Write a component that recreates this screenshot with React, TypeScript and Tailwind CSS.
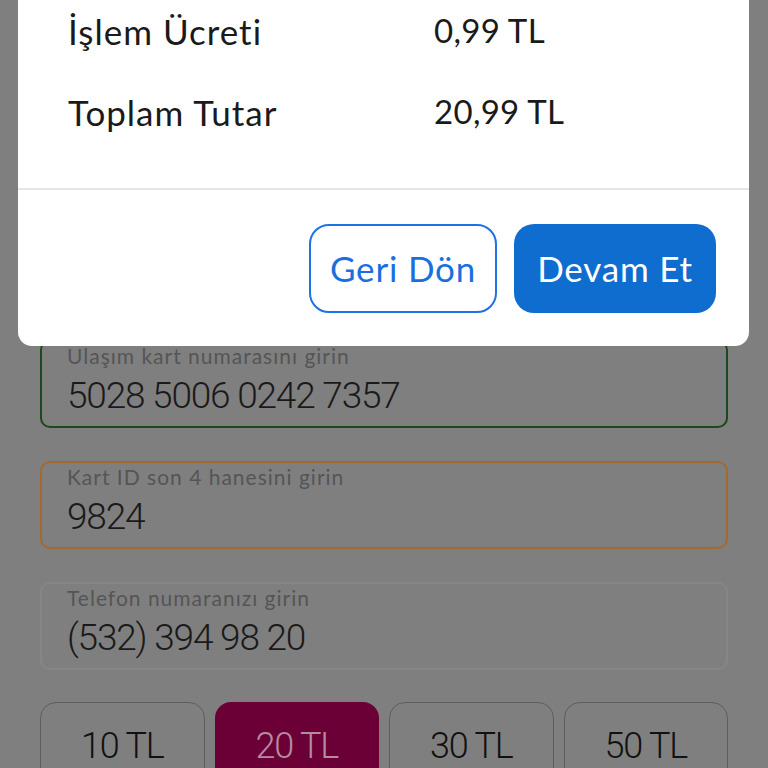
import React from "react";

const rounded = { fontFamily: "Lato, 'Open Sans', sans-serif" } as React.CSSProperties;
const cond = { fontFamily: "Roboto, 'Liberation Sans', sans-serif" } as React.CSSProperties;

function Field({ label, value, border }: { label: string; value: string; border: string }) {
  return (
    <div className={`h-[88px] rounded-[10px] border-2 ${border} px-[25px] pt-[2px] flex flex-col`}>
      <div className="text-[21px] leading-[24px] text-[#555555] tracking-[1px]" style={rounded}>
        {label}
      </div>
      <div className="text-[37px] leading-[44px] text-[#1a1a1a] tracking-[-1.2px] font-light mt-[6px]" style={cond}>
        {value}
      </div>
    </div>
  );
}

export default function App() {
  const amounts = ["10 TL", "20 TL", "30 TL", "50 TL"];
  return (
    <div className="relative w-[768px] h-[768px] overflow-hidden bg-[#7f7f7f]">
      <div className="flex flex-col px-[40px] pt-[340px] gap-[33px]">
        <Field label="Ulaşım kart numarasını girin" value="5028 5006 0242 7357" border="border-[#1e471e]" />
        <Field label="Kart ID son 4 hanesini girin" value="9824" border="border-[#a4692c]" />
        <Field label="Telefon numaranızı girin" value="(532) 394 98 20" border="border-[#868686]" />
        <div className="grid grid-cols-4 gap-[10px] -mt-[1px]">
          {amounts.map((a, i) => (
            <div
              key={a}
              className={
                i === 1
                  ? "h-[90px] rounded-[16px] bg-[#6a0035] text-[#b68ba2] flex justify-center pt-[22px]"
                  : "h-[90px] rounded-[16px] border border-[#5e5e5e] text-[#111111] flex justify-center pt-[21px]"
              }
            >
              <span className="text-[36px] leading-[44px] font-light tracking-[-1.2px]" style={cond}>
                {a}
              </span>
            </div>
          ))}
        </div>
      </div>

      <div className="absolute left-[18px] right-[19px] top-0 h-[346px] bg-white rounded-b-[14px] flex flex-col">
        <div className="h-[188px] px-[50px] flex flex-col text-[#1a1a1a]" style={rounded}>
          <div className="flex items-center h-[62px]">
            <span className="w-[366px] text-[35px] tracking-[1px]">İşlem Ücreti</span>
            <span className="text-[33px] tracking-[0.3px]">0,99 TL</span>
          </div>
          <div className="flex items-center h-[100px]">
            <span className="w-[366px] text-[35px] tracking-[1px]">Toplam Tutar</span>
            <span className="text-[33px] tracking-[0.3px]">20,99 TL</span>
          </div>
        </div>
        <div className="h-[2px] bg-[#e6e6e6]" />
        <div className="flex justify-end gap-[17px] pr-[33px] pt-[34px]">
          <button
            className="w-[188px] h-[89px] rounded-[20px] border-2 border-[#1f72e6] text-[#1a6fe0] text-[35px] tracking-[0.8px] bg-white"
            style={rounded}
          >
            Geri Dön
          </button>
          <button
            className="w-[202px] h-[89px] rounded-[20px] bg-[#0f6dd0] text-white text-[35px] tracking-[0.8px]"
            style={rounded}
          >
            Devam Et
          </button>
        </div>
      </div>
    </div>
  );
}
